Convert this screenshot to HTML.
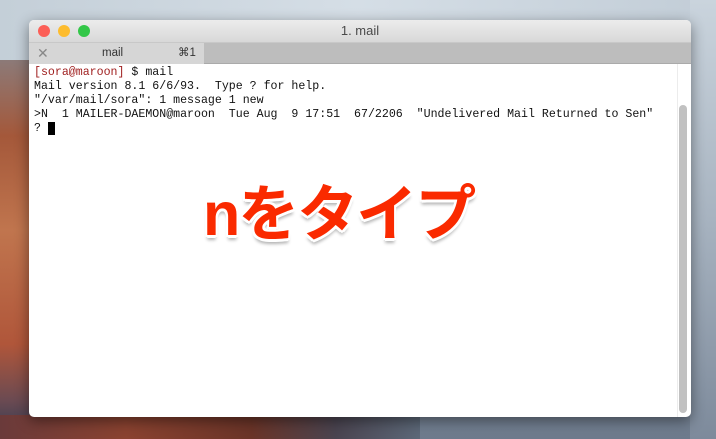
<!DOCTYPE html>
<html><head><meta charset="utf-8">
<style>
html,body{margin:0;padding:0}
body{width:716px;height:439px;overflow:hidden;position:relative;
background:linear-gradient(180deg,#c9d4de 0%,#b7c3cf 30%,#97a3b2 70%,#6d7a8c 100%);}
.rock{position:absolute;left:0;top:60px;width:30px;height:379px;
background:linear-gradient(180deg,#8c7a78 0%,#a4583a 20%,#c0754e 45%,#b0563a 75%,#6a4a52 90%,#2e3a52 100%);}
.rock2{position:absolute;left:0;top:415px;width:420px;height:24px;
background:linear-gradient(90deg,#6a3a3a 0%,#8a4230 30%,#6a3428 60%,#4a4450 80%,#5c6878 100%);}
.sky{position:absolute;left:0;top:0;width:716px;height:60px;
background:linear-gradient(90deg,#c4cfd8,#d5dee6 50%,#c2cdd7);}
.rightside{position:absolute;left:690px;top:0;width:26px;height:439px;
background:linear-gradient(180deg,#cad4dd,#a7b3c0 50%,#7d8a9b);}
.win{position:absolute;left:29px;top:20px;width:662px;height:397px;border-radius:5px;overflow:hidden;background:#fff;box-shadow:0 4px 14px rgba(0,0,0,.45);}
.title{height:22px;background:linear-gradient(#ececec,#d8d8d8);position:relative;font:13px "Liberation Sans",sans-serif;color:#4a4a4a;text-align:center;line-height:22px}
.dot{position:absolute;top:5px;width:12px;height:12px;border-radius:50%}
.tabs{height:22px;background:#bdbdbd;position:relative;border-top:1px solid #c8c8c8;border-bottom:1px solid #aaa;box-sizing:border-box}
.tab{position:absolute;left:0;top:0;width:175px;height:21px;background:#d6d6d6;font:11.5px "Liberation Sans",sans-serif;color:#333;line-height:20px}
.term{position:absolute;left:5px;top:46px;font:11.6px/14px "Liberation Mono",monospace;color:#111;white-space:pre}
.sb{position:absolute;left:650px;top:85px;width:8px;height:308px;background:#c1c1c1;border-radius:4px}
.sbt{position:absolute;left:648px;top:44px;width:1px;height:353px;background:#ececec}
.big{position:absolute;left:174px;top:144px;font:bold 61px "Liberation Sans","Noto Sans CJK JP",sans-serif;color:#fa2a00;
text-shadow:0 0 2px #fff,2px 2px 0 #fff,-2px -2px 0 #fff,2px -2px 0 #fff,-2px 2px 0 #fff,0 3px 0 #fff,0 5px 3px rgba(0,0,0,.3);letter-spacing:-2px}
</style></head><body>
<div class="sky"></div><div class="rightside"></div><div class="rock"></div><div class="rock2"></div>
<div class="win">
 <div class="title">
  <div class="dot" style="left:9px;background:#fc5f57"></div>
  <div class="dot" style="left:29px;background:#fdbc2e"></div>
  <div class="dot" style="left:49px;background:#33c748"></div>
  1. mail
 </div>
 <div class="tabs"><div class="tab"><span style="position:absolute;left:8px;color:#888;font-size:14px">✕</span><span style="position:absolute;left:73px">mail</span><span style="position:absolute;left:149px">⌘1</span></div></div>
 <div class="term"><span style="color:#a02020">[sora@maroon]</span> $ mail
Mail version 8.1 6/6/93.  Type ? for help.
"/var/mail/sora": 1 message 1 new
>N  1 MAILER-DAEMON@maroon  Tue Aug  9 17:51  67/2206  "Undelivered Mail Returned to Sen"
? <span style="background:#000">&nbsp;</span></div>
 <div class="sbt"></div><div class="sb"></div>
 <div class="big">nをタイプ</div>
</div>
</body></html>
